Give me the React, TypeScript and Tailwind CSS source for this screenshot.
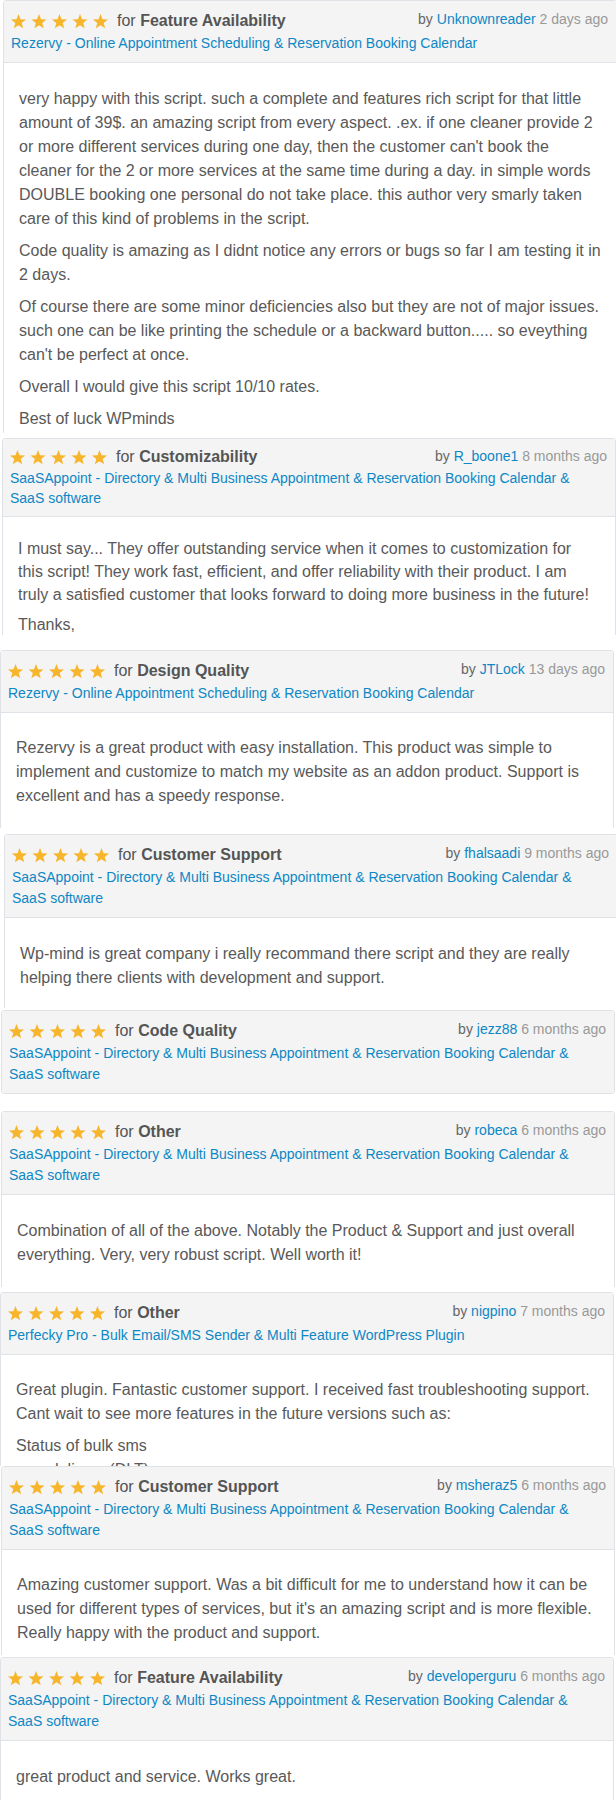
import React from "react";

const REZ = "Rezervy - Online Appointment Scheduling & Reservation Booking Calendar";
const SAAS =
  "SaaSAppoint - Directory & Multi Business Appointment & Reservation Booking Calendar & SaaS software";
const PERF = "Perfecky Pro - Bulk Email/SMS Sender & Multi Feature WordPress Plugin";

function Stars() {
  const pts =
    "7.5,0 9.5,5.3 15,5.5 10.7,8.9 12.2,14.3 7.5,11.2 2.8,14.3 4.3,8.9 0,5.5 5.5,5.3";
  return (
    <svg width="97" height="15" viewBox="0 0 97 15" className="shrink-0 block">
      {[0, 20.5, 41, 61.5, 82].map((x) => (
        <polygon key={x} points={pts} transform={`translate(${x} 0)`} fill="#f7b52c" />
      ))}
    </svg>
  );
}

type CardProps = {
  wrap: string;
  cat: string;
  user: string;
  time: string;
  product: string;
  body?: React.ReactNode[];
  headCls: string;
  rowCls: string;
  linkCls: string;
  bodyCls: string;
  pCls: string;
  full?: boolean;
};

const NORMAL = {
  headCls: "pt-2 pb-2",
  rowCls: "h-6 leading-6",
  linkCls: "leading-[21px]",
  pCls: "mb-2",
};
const COMPACT = {
  headCls: "pt-[7px] pb-2",
  rowCls: "h-[22px] leading-[22px]",
  linkCls: "leading-5",
  pCls: "mb-[7px]",
};

function Card(p: CardProps) {
  return (
    <div className={`overflow-hidden ${p.wrap}`}>
      <div className="w-[614px] rounded-[3px] border border-[#dfe3e8] bg-white">
        <div
          className={`rounded-t-[3px] bg-[#f4f4f4] pl-[7px] pr-2 ${p.headCls} ${
            p.full ? "rounded-b-[3px]" : "border-b border-[#dfe3e8]"
          }`}
        >
          <div className="flex items-start justify-between">
            <div className={`flex items-center text-base text-[#555] ${p.rowCls}`}>
              <Stars />
              <span className="ml-[9px]">
                for <span className="font-bold">{p.cat}</span>
              </span>
            </div>
            <div className="text-sm leading-5 text-[#666]">
              by <span className="text-[#0d87c5]">{p.user}</span>{" "}
              <span className="text-[#999]">{p.time}</span>
            </div>
          </div>
          <div className={`text-sm text-[#0d87c5] ${p.linkCls}`}>{p.product}</div>
        </div>
        {p.body && (
          <div className={`pl-[15px] pb-[60px] text-base text-[#595959] ${p.bodyCls}`}>
            {p.body.map((t, i) => (
              <p key={i} className={p.pCls}>
                {t}
              </p>
            ))}
          </div>
        )}
      </div>
    </div>
  );
}

export default function App() {
  return (
    <div className="w-[616px] overflow-hidden bg-white font-['Liberation_Sans',Arial,sans-serif]">
      <Card
        wrap="h-[433px] pl-[3px]"
        cat="Feature Availability"
        user="Unknownreader"
        time="2 days ago"
        product={REZ}
        {...NORMAL}
        bodyCls="pt-6 pr-[14.5px] leading-6"
        body={[
          "very happy with this script. such a complete and features rich script for that little amount of 39$. an amazing script from every aspect. .ex. if one cleaner provide 2 or more different services during one day, then the customer can't book the cleaner for the 2 or more services at the same time during a day. in simple words DOUBLE booking one personal do not take place. this author very smarly taken care of this kind of problems in the script.",
          "Code quality is amazing as I didnt notice any errors or bugs so far I am testing it in 2 days.",
          "Of course there are some minor deficiencies also but they are not of major issues. such one can be like printing the schedule or a backward button..... so eveything can't be perfect at once.",
          "Overall I would give this script 10/10 rates.",
          "Best of luck WPminds",
        ]}
      />
      <Card
        wrap="mt-[5px] h-[197px] pl-[2px]"
        cat="Customizability"
        user="R_boone1"
        time="8 months ago"
        product={SAAS}
        {...COMPACT}
        bodyCls="pt-5 pr-[19px] leading-[23px]"
        body={[
          "I must say... They offer outstanding service when it comes to customization for this script! They work fast, efficient, and offer reliability with their product. I am truly a satisfied customer that looks forward to doing more business in the future!",
          "Thanks,",
        ]}
      />
      <Card
        wrap="mt-[15px] h-[178px] pl-0"
        cat="Design Quality"
        user="JTLock"
        time="13 days ago"
        product={REZ}
        {...NORMAL}
        bodyCls="pt-[23px] pr-[14.5px] leading-6"
        body={[
          "Rezervy is a great product with easy installation. This product was simple to implement and customize to match my website as an addon product. Support is excellent and has a speedy response.",
        ]}
      />
      <Card
        wrap="mt-[6px] h-[174px] pl-[4px]"
        cat="Customer Support"
        user="fhalsaadi"
        time="9 months ago"
        product={SAAS}
        {...NORMAL}
        bodyCls="pt-6 pr-[14.5px] leading-6"
        body={[
          "Wp-mind is great company i really recommand there script and they are really helping there clients with development and support.",
        ]}
      />
      <Card
        wrap="mt-[2px] pl-[1px]"
        cat="Code Quality"
        user="jezz88"
        time="6 months ago"
        product={SAAS}
        {...NORMAL}
        bodyCls=""
        full
      />
      <Card
        wrap="mt-[17px] h-[176px] pl-[1px]"
        cat="Other"
        user="robeca"
        time="6 months ago"
        product={SAAS}
        {...NORMAL}
        bodyCls="pt-6 pr-[14.5px] leading-6"
        body={[
          "Combination of all of the above. Notably the Product & Support and just overall everything. Very, very robust script. Well worth it!",
        ]}
      />
      <Card
        wrap="mt-[5px] h-[174px] pl-0"
        cat="Other"
        user="nigpino"
        time="7 months ago"
        product={PERF}
        {...NORMAL}
        bodyCls="pt-[23px] pr-[14.5px] leading-6"
        body={[
          "Great plugin. Fantastic customer support. I received fast troubleshooting support. Cant wait to see more features in the future versions such as:",
          <>
            Status of bulk sms
            <br />
            sms delivery (DLT)
          </>,
        ]}
      />
      <Card
        wrap="h-[189px] pl-[1px]"
        cat="Customer Support"
        user="msheraz5"
        time="6 months ago"
        product={SAAS}
        {...NORMAL}
        bodyCls="pt-[23px] pr-[14.5px] leading-6"
        body={[
          "Amazing customer support. Was a bit difficult for me to understand how it can be used for different types of services, but it's an amazing script and is more flexible. Really happy with the product and support.",
        ]}
      />
      <Card
        wrap="mt-[2px] h-[143px] pl-0"
        cat="Feature Availability"
        user="developerguru"
        time="6 months ago"
        product={SAAS}
        {...NORMAL}
        bodyCls="pt-6 pr-[14.5px] leading-6"
        body={["great product and service. Works great."]}
      />
    </div>
  );
}
